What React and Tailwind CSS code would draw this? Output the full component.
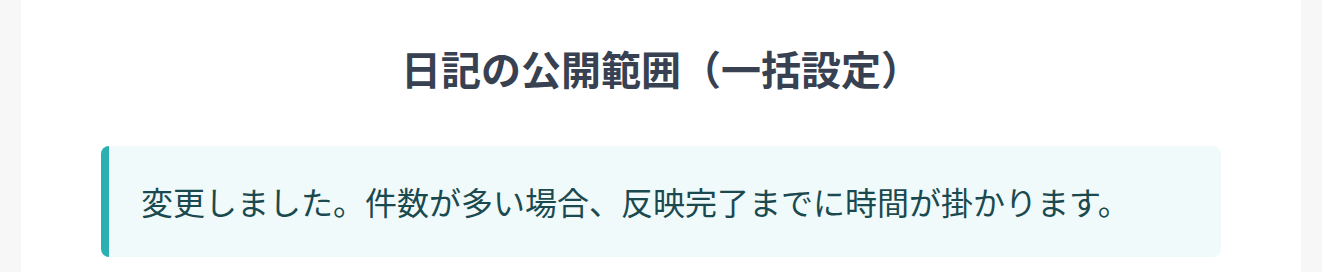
export default function App() {
  return (
    <div className="min-h-[272px] w-full bg-[#f7f7f7] flex justify-center" style={{ fontFamily: '"Noto Sans CJK JP", "Noto Sans", sans-serif' }}>
      <div className="w-[1280px] min-h-[272px] bg-white px-[80px] pt-[38px]">
        <h1 className="text-center text-[40px] leading-[60px] font-bold text-[#374151]">
          日記の公開範囲（一括設定）
        </h1>
        <div className="mt-[48px] rounded-[8px] border-l-[8px] border-[#2aafb2] bg-[#f1fafa] px-[32px] py-[32px]">
          <p className="text-[32px] leading-[47px] text-[#1a4a4f]">
            変更しました。件数が多い場合、反映完了までに時間が掛かります。
          </p>
        </div>
      </div>
    </div>
  );
}
